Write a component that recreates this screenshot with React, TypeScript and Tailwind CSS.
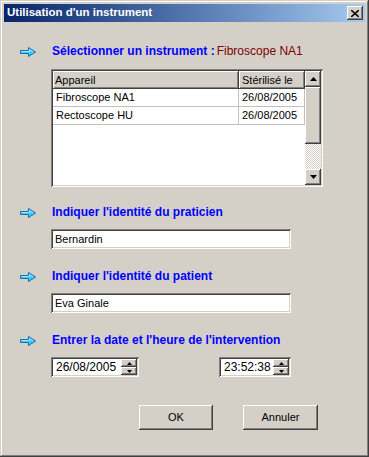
import React from "react"

const raised =
  "shadow-[inset_-1px_-1px_#404040,inset_1px_1px_#ffffff,inset_-2px_-2px_#808080,inset_2px_2px_#d4d0c8]"
const sunken =
  "shadow-[inset_1px_1px_#808080,inset_-1px_-1px_#ffffff,inset_2px_2px_#404040,inset_-2px_-2px_#d4d0c8]"

function Arrow() {
  return (
    <svg width="16" height="10" viewBox="0 0 16 10" className="shrink-0">
      <path
        d="M0.5 3.5 H8.5 V0.5 L15.5 5 L8.5 9.5 V6.5 H0.5 Z"
        fill="#3ccaf5"
        stroke="#1070b8"
        strokeWidth="1"
      />
      <path d="M1.5 4.5 H9.5 V2.5 L13 5" fill="none" stroke="#a8ecff" strokeWidth="1" />
    </svg>
  )
}

function Heading({ children }: { children: React.ReactNode }) {
  return (
    <div className="flex h-[14px] items-center">
      <div className="w-[48px] pl-[16px] pt-[2px]">
        <Arrow />
      </div>
      <div className="text-[12px] font-bold leading-none text-[#0000ff]">{children}</div>
    </div>
  )
}

function SpinButtons() {
  return (
    <div className="flex w-[16px] flex-col">
      <div className={`flex h-[8px] items-center justify-center bg-[#d4d0c8] ${raised}`}>
        <svg width="5" height="3" viewBox="0 0 5 3">
          <path d="M2.5 0 L5 3 H0 Z" fill="#000" />
        </svg>
      </div>
      <div className={`flex h-[8px] items-center justify-center bg-[#d4d0c8] ${raised}`}>
        <svg width="5" height="3" viewBox="0 0 5 3">
          <path d="M0 0 H5 L2.5 3 Z" fill="#000" />
        </svg>
      </div>
    </div>
  )
}

function Spinner({ value, width }: { value: string; width: string }) {
  return (
    <div className={`flex h-[20px] items-center bg-white p-[2px] ${width} ${sunken}`}>
      <div className="flex-1 pl-[3px] text-[12px] text-black">{value}</div>
      <SpinButtons />
    </div>
  )
}

export default function App() {
  return (
    <div
      className="h-[457px] w-[369px] bg-[#d4d0c8] p-[4px] shadow-[inset_-1px_-1px_#404040,inset_1px_1px_#d4d0c8,inset_-2px_-2px_#808080,inset_2px_2px_#ffffff]"
      style={{ fontFamily: '"Liberation Sans", Arial, sans-serif' }}
    >
      {/* Title bar */}
      <div className="flex h-[18px] items-center justify-between bg-gradient-to-r from-[#0a246a] to-[#a6caf0] pl-[3px] pr-[2px]">
        <span className="text-[11.5px] font-bold text-white">Utilisation d'un instrument</span>
        <div className={`flex h-[14px] w-[16px] items-center justify-center bg-[#d4d0c8] ${raised}`}>
          <svg width="8" height="7" viewBox="0 0 8 7">
            <path d="M0 0 L8 7 M8 0 L0 7" stroke="#000" strokeWidth="1.6" />
          </svg>
        </div>
      </div>

      {/* Content */}
      <div className="flex flex-col pt-[22px]">
        <Heading>
          Sélectionner un instrument :
          <span className="ml-[2px] font-normal text-[#800000]">Fibroscope NA1</span>
        </Heading>

        {/* List view */}
        <div className={`ml-[47px] mt-[11px] flex h-[118px] w-[272px] bg-white p-[2px] ${sunken}`}>
          <div className="flex flex-1 flex-col text-[11px] text-black">
            <div className="flex h-[18px]">
              <div className={`flex w-[186px] items-center bg-[#d4d0c8] pl-[2px] ${raised}`}>Appareil</div>
              <div className={`flex w-[66px] items-center bg-[#d4d0c8] pl-[3px] ${raised}`}>Stérilisé le</div>
            </div>
            {[
              ["Fibroscope NA1", "26/08/2005"],
              ["Rectoscope HU", "26/08/2005"],
            ].map(([name, date]) => (
              <div key={name} className="flex h-[18px] border-b border-[#c0c0c0]">
                <div className="flex w-[186px] items-center border-r border-[#c0c0c0] pl-[3px]">{name}</div>
                <div className="flex w-[66px] items-center border-r border-[#c0c0c0] pl-[3px]">{date}</div>
              </div>
            ))}
          </div>
          {/* Scrollbar */}
          <div className="flex w-[16px] flex-col bg-[repeating-conic-gradient(#ffffff_0%_25%,#d4d0c8_0%_50%)] bg-[length:2px_2px]">
            <div className={`flex h-[16px] items-center justify-center bg-[#d4d0c8] ${raised}`}>
              <svg width="7" height="4" viewBox="0 0 7 4">
                <path d="M3.5 0 L7 4 H0 Z" fill="#000" />
              </svg>
            </div>
            <div className={`h-[57px] bg-[#d4d0c8] ${raised}`} />
            <div className="flex-1" />
            <div className={`flex h-[16px] items-center justify-center bg-[#d4d0c8] ${raised}`}>
              <svg width="7" height="4" viewBox="0 0 7 4">
                <path d="M0 0 H7 L3.5 4 Z" fill="#000" />
              </svg>
            </div>
          </div>
        </div>

        <div className="mt-[18px]">
          <Heading>Indiquer l'identité du praticien</Heading>
        </div>
        <div className={`ml-[47px] mt-[10px] flex h-[20px] w-[240px] items-center bg-white pl-[4px] text-[11px] text-black ${sunken}`}>
          Bernardin
        </div>

        <div className="mt-[20px]">
          <Heading>Indiquer l'identité du patient</Heading>
        </div>
        <div className={`ml-[47px] mt-[10px] flex h-[20px] w-[240px] items-center bg-white pl-[4px] text-[11px] text-black ${sunken}`}>
          Eva Ginale
        </div>

        <div className="mt-[20px]">
          <Heading>Entrer la date et l'heure de l'intervention</Heading>
        </div>
        <div className="ml-[47px] mt-[10px] flex gap-[80px]">
          <Spinner value="26/08/2005" width="w-[88px]" />
          <Spinner value="23:52:38" width="w-[72px]" />
        </div>

        {/* Buttons */}
        <div className="ml-[135px] mt-[28px] flex gap-[30px] text-[11px] text-black">
          <button className={`h-[25px] w-[74px] bg-[#d4d0c8] ${raised}`}>OK</button>
          <button className={`h-[25px] w-[75px] bg-[#d4d0c8] ${raised}`}>Annuler</button>
        </div>
      </div>
    </div>
  )
}
